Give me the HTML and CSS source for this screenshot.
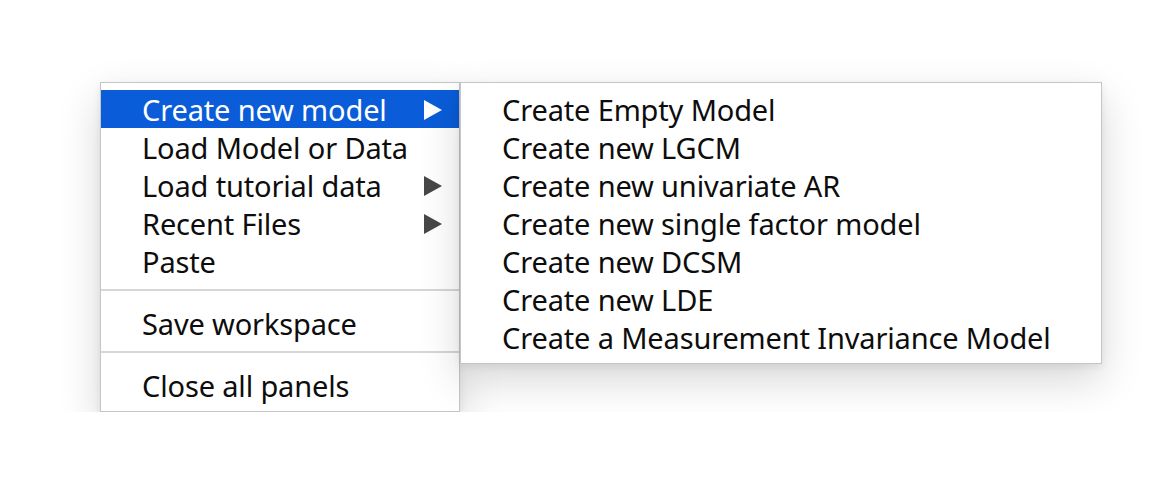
FILE: index.html
```html
<!DOCTYPE html>
<html>
<head>
<meta charset="utf-8">
<link rel="stylesheet" href="styles.css">
</head>
<body>
<div class="stage">
  <div class="menu main-menu">
    <div class="item active"><span class="label">Create new model</span><svg class="arrow" width="18" height="20" viewBox="0 0 18 20"><polygon points="0,0 18,10 0,20"/></svg></div>
    <div class="item"><span class="label">Load Model or Data</span></div>
    <div class="item"><span class="label">Load tutorial data</span><svg class="arrow" width="18" height="20" viewBox="0 0 18 20"><polygon points="0,0 18,10 0,20"/></svg></div>
    <div class="item"><span class="label">Recent Files</span><svg class="arrow" width="18" height="20" viewBox="0 0 18 20"><polygon points="0,0 18,10 0,20"/></svg></div>
    <div class="item"><span class="label">Paste</span></div>
    <div class="separator"></div>
    <div class="item"><span class="label">Save workspace</span></div>
    <div class="separator"></div>
    <div class="item"><span class="label">Close all panels</span></div>
  </div>
  <div class="menu sub-menu">
    <div class="item"><span class="label">Create Empty Model</span></div>
    <div class="item"><span class="label">Create new LGCM</span></div>
    <div class="item"><span class="label">Create new univariate AR</span></div>
    <div class="item"><span class="label">Create new single factor model</span></div>
    <div class="item"><span class="label">Create new DCSM</span></div>
    <div class="item"><span class="label">Create new LDE</span></div>
    <div class="item"><span class="label">Create a Measurement Invariance Model</span></div>
  </div>
</div>
</body>
</html>
```
FILE: styles.css
```css
* { box-sizing: border-box; }
html, body {
  margin: 0;
  padding: 0;
  background: #ffffff;
}
body {
  font-family: "Noto Sans", "DejaVu Sans", sans-serif;
  font-size: 29px;
  letter-spacing: -0.15px;
  color: #0d0d0d;
}
.stage {
  display: flex;
  align-items: flex-start;
  padding: 82px 0 0 100px;
}
.menu {
  background: #ffffff;
  border: 1px solid #c6c6c6;
  padding: 7px 0;
  box-shadow: 0 16px 40px rgba(0, 0, 0, 0.16), 0 3px 8px rgba(0, 0, 0, 0.07);
}
.main-menu {
  width: 360px;
  position: relative;
  z-index: 1;
}
.sub-menu {
  width: 642px;
  position: relative;
  z-index: 2;
}
.item {
  display: flex;
  align-items: center;
  height: 38px;
  line-height: 38px;
  padding: 0 17px 0 41px;
  white-space: nowrap;
}
.item .label {
  flex: 1;
  padding-top: 1px;
}
.item.active {
  background: #0a5cd8;
  color: #ffffff;
}
.arrow {
  display: block;
  fill: #474747;
  margin-top: 1px;
}
.item.active .arrow {
  fill: #ffffff;
}
.separator {
  height: 2px;
  margin: 9px 0 13px;
  background: #d6d6d6;
}
```
